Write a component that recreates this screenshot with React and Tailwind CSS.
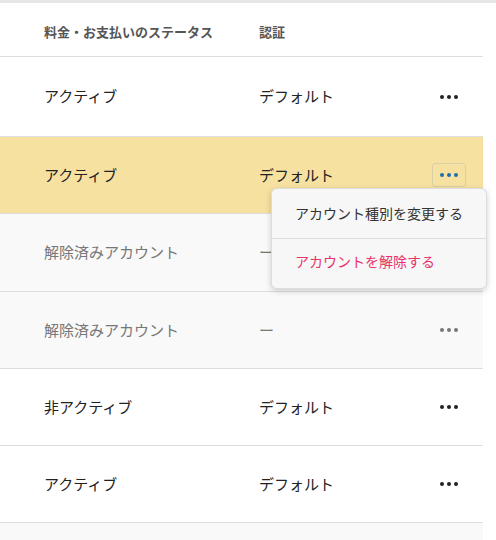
import React from "react";

const font = { fontFamily: '"Noto Sans CJK JP", "Noto Sans", sans-serif' };

function Dots({ color = "bg-[#222]" }) {
  return (
    <div className="flex gap-[3px]">
      <span className={`w-[4px] h-[4px] rounded-full ${color}`} />
      <span className={`w-[4px] h-[4px] rounded-full ${color}`} />
      <span className={`w-[4px] h-[4px] rounded-full ${color}`} />
    </div>
  );
}

function Row({ status, auth, h = "h-[77px]", bg = "bg-white", muted = false, active = false }) {
  const txt = muted ? "text-[#777]" : "text-[#222]";
  return (
    <div className={`relative flex items-center ${h} border-b border-[#dedede] ${bg}`}>
      <div className={`w-[259px] pl-[44px] text-[15px] ${txt}`}>{status}</div>
      <div className={`w-[173px] text-[15px] ${txt}`}>{auth}</div>
      <div className="w-[34px] flex justify-center">
        {active ? (
          <div className="w-[34px] h-[24px] rounded-[3px] border border-[#d9cfa8] flex items-center justify-center">
            <Dots color="bg-[#1e6fb0]" />
          </div>
        ) : (
          <div className="w-[34px] h-[24px] flex items-center justify-center">
            <Dots color={muted ? "bg-[#777]" : "bg-[#222]"} />
          </div>
        )}
      </div>
      {active && (
        <div className="absolute z-10 left-[271px] top-[51px] w-[216px] rounded-[6px] bg-[#f7f7f7] border border-[#dcdcdc] shadow-[0_2px_6px_rgba(0,0,0,0.18)]">
          <div className="h-[49px] flex items-center pl-[23px] text-[14px] text-[#333]">アカウント種別を変更する</div>
          <div className="h-px bg-[#dcdcdc]" />
          <div className="h-[49px] flex items-center pb-[5px] pl-[23px] text-[14px] text-[#e8336b]">アカウントを解除する</div>
        </div>
      )}
    </div>
  );
}

export default function App() {
  return (
    <div className="w-[496px] h-[540px] bg-white overflow-hidden" style={font}>
      <div className="h-[3px] bg-[#e6e6e6]" />
      <div className="w-[483px]">
        <div className="flex items-center h-[54px] pt-[4px] border-b border-[#dedede]">
          <div className="w-[259px] pl-[44px] text-[13px] font-bold text-[#555]">料金・お支払いのステータス</div>
          <div className="text-[13px] font-bold text-[#555]">認証</div>
        </div>
        <Row status="アクティブ" auth="デフォルト" h="h-[80px]" />
        <Row status="アクティブ" auth="デフォルト" bg="bg-[#f7e1a1]" active />
        <Row status="解除済みアカウント" auth="ー" h="h-[78px]" bg="bg-[#f9f9f9]" muted />
        <Row status="解除済みアカウント" auth="ー" bg="bg-[#f9f9f9]" muted />
        <Row status="非アクティブ" auth="デフォルト" />
        <Row status="アクティブ" auth="デフォルト" />
        <div className="h-[40px] bg-[#f9f9f9]" />
      </div>
    </div>
  );
}
